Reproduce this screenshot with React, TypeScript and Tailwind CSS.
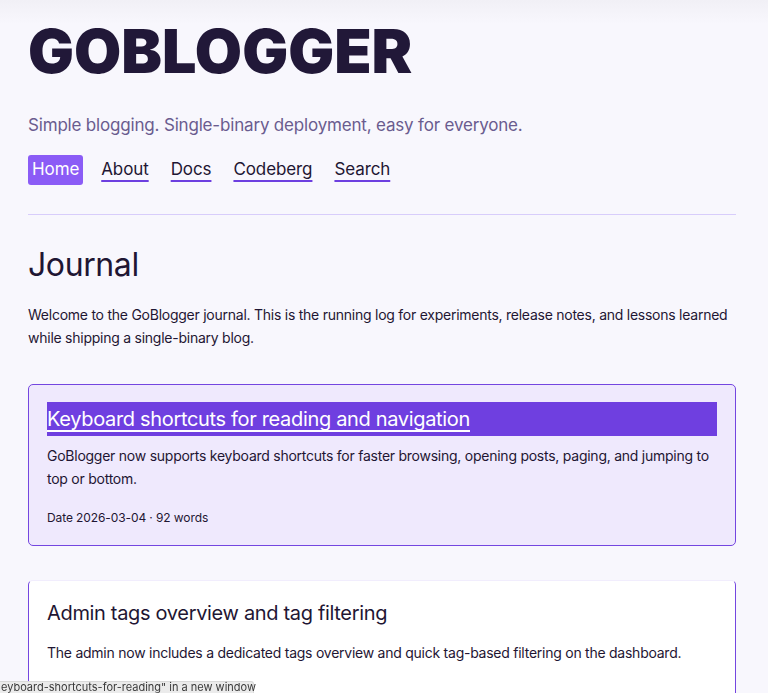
import React from "react";

const font = { fontFamily: "Inter, 'Noto Sans', sans-serif" };
const link = "underline decoration-[#6d3fe0] decoration-[1.5px] underline-offset-[5px]";

export default function App() {
  return (
    <div className="min-h-[693px] bg-[#f8f7fd] text-[#1f1633] relative overflow-hidden" style={font}>
      <div className="absolute inset-x-0 top-0 h-[24px] bg-gradient-to-b from-[#f1f0f6] to-[#f8f7fd] pointer-events-none" />
      <div className="relative pl-[28px] pr-[32px]">
        <header>
          <h1 className="pt-[21px] text-[61px] leading-[60px] font-black tracking-normal text-[#211838]">GOBLOGGER</h1>
          <p className="mt-[31px] text-[17px] leading-[26px] tracking-[-0.18px] text-[#6a5c8f]">
            Simple blogging. Single-binary deployment, easy for everyone.
          </p>
          <nav className="mt-[17px] flex items-center gap-[22px] text-[17px] tracking-[-0.1px]">
            <a className="h-[30px] px-[4px] -mr-[4px] flex items-center rounded-[3px] bg-[#8b5cf6] text-white">Home</a>
            <a className={link}>About</a>
            <a className={link}>Docs</a>
            <a className={link}>Codeberg</a>
            <a className={link}>Search</a>
          </nav>
          <hr className="mt-[29px] border-0 h-px bg-[#d8cdfb]" />
        </header>
        <main>
          <h2 className="mt-[30px] text-[32px] leading-[40px] font-normal tracking-[-0.4px]">Journal</h2>
          <p className="mt-[18px] text-[14px] leading-[23px] tracking-[-0.25px]">
            Welcome to the GoBlogger journal. This is the running log for experiments, release notes, and lessons learned
            while shipping a single-binary blog.
          </p>
          <article className="mt-[35px] border border-[#7446e0] rounded-[5px] bg-[#efe9fd] px-[18px] pt-[17px] pb-[18px]">
            <h3 className="h-[34px] bg-[#6f3fe0] text-white text-[20px] leading-[34px] tracking-[-0.33px]">
              <a className="underline decoration-white decoration-[2px] underline-offset-[4px]">
                Keyboard shortcuts for reading and navigation
              </a>
            </h3>
            <p className="mt-[8px] text-[14px] leading-[23px] tracking-[-0.25px]">
              GoBlogger now supports keyboard shortcuts for faster browsing, opening posts, paging, and jumping to top or
              bottom.
            </p>
            <p className="mt-[19px] text-[12px] leading-[18px] tracking-[-0.1px]">Date 2026-03-04 · 92 words</p>
          </article>
          <article className="mt-[34px] border border-[#7446e0] border-t-[#f1edfd] rounded-[5px] bg-white px-[18px] pt-[15px] pb-[18px]">
            <h3 className="h-[34px] text-[20px] leading-[34px] tracking-[-0.33px]">Admin tags overview and tag filtering</h3>
            <p className="mt-[11px] text-[14px] leading-[23px] tracking-[-0.25px]">
              The admin now includes a dedicated tags overview and quick tag-based filtering on the dashboard.
            </p>
            <p className="mt-[19px] text-[12px] leading-[18px]">Date 2026-03-01 · 64 words</p>
          </article>
        </main>
      </div>
      <div className="fixed left-0 bottom-0 h-[12px] w-[254px] bg-[#ebebeb] border-t border-r border-[#d9d9d9] rounded-tr-[3px] whitespace-nowrap text-[11px] leading-[11px] text-[#3a3a3a] pl-[1px]">
        eyboard-shortcuts-for-reading" in a new window
      </div>
    </div>
  );
}
